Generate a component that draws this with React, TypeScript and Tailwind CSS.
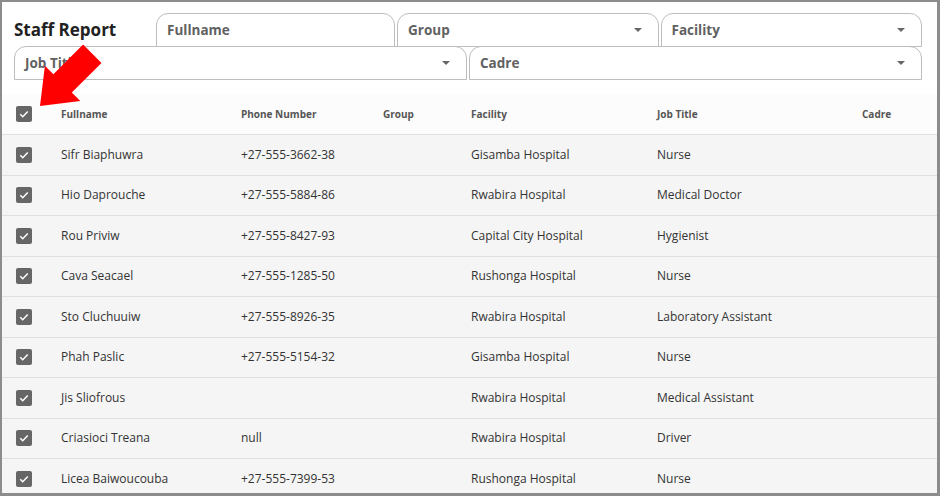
import React from "react";

const rows = [
    { name: "Sifr Biaphuwra", phone: "+27-555-3662-38", facility: "Gisamba Hospital", job: "Nurse" },
    { name: "Hio Daprouche", phone: "+27-555-5884-86", facility: "Rwabira Hospital", job: "Medical Doctor" },
    { name: "Rou Priviw", phone: "+27-555-8427-93", facility: "Capital City Hospital", job: "Hygienist" },
    { name: "Cava Seacael", phone: "+27-555-1285-50", facility: "Rushonga Hospital", job: "Nurse" },
    { name: "Sto Cluchuuiw", phone: "+27-555-8926-35", facility: "Rwabira Hospital", job: "Laboratory Assistant" },
    { name: "Phah Paslic", phone: "+27-555-5154-32", facility: "Gisamba Hospital", job: "Nurse" },
    { name: "Jis Sliofrous", phone: "", facility: "Rwabira Hospital", job: "Medical Assistant" },
    { name: "Criasioci Treana", phone: "null", facility: "Rwabira Hospital", job: "Driver" },
    { name: "Licea Baiwoucouba", phone: "+27-555-7399-53", facility: "Rushonga Hospital", job: "Nurse" },
];

const cols = "grid grid-cols-[59px_180px_142px_88px_186px_205px_1fr] items-center";

function Check() {
    return (
        <div className="w-[16px] h-[16px] rounded-[2px] bg-[#666666] flex items-center justify-center">
            <svg width="12" height="12" viewBox="0 0 24 24">
                <path d="M4.5 12.5l5 5L19.5 7" fill="none" stroke="#fff" strokeWidth="3" />
            </svg>
        </div>
    );
}

function Filter({ label, select }: { label: string; select?: boolean }) {
    return (
        <div className="h-[34px] border border-[#bdbdbd] rounded-t-[12px] bg-white flex items-center justify-between pl-[10px] pr-[16px]">
            <span className="text-[13.5px] font-bold text-[#616161]">{label}</span>
            {select && (
                <svg width="8" height="4" viewBox="0 0 8 4">
                    <path d="M0 0h8L4 4z" fill="#666" />
                </svg>
            )}
        </div>
    );
}

export default function App() {
    return (
        <div
            className="relative w-[940px] h-[496px] overflow-hidden bg-white border-l-2 border-t-2 border-r-[3px] border-b-[3px] border-[#8c8c8c]"
            style={{ fontFamily: '"Open Sans", "Liberation Sans", sans-serif' }}
        >
            <div className="pt-[11px] pl-[12px] pr-[15px]">
                <div className="grid grid-cols-[140px_239px_1fr_1fr] gap-x-[2px]">
                    <div className="flex items-center h-[34px]">
                        <h1 className="text-[17px] font-bold text-[#222]">Staff Report</h1>
                    </div>
                    <Filter label="Fullname" />
                    <Filter label="Group" select />
                    <Filter label="Facility" select />
                </div>
                <div className="grid grid-cols-2 gap-x-[2px] -mt-px">
                    <Filter label="Job Title" select />
                    <Filter label="Cadre" select />
                </div>
            </div>

            <div className="mt-[14px]">
                <div className={`${cols} h-[41px] bg-[#fcfcfc] border-b border-[#e0e0e0] text-[10px] font-bold text-[#555]`}>
                    <div className="pl-[14px]"><Check /></div>
                    <div>Fullname</div>
                    <div>Phone Number</div>
                    <div>Group</div>
                    <div>Facility</div>
                    <div>Job Title</div>
                    <div>Cadre</div>
                </div>
                {rows.map((r) => (
                    <div key={r.name} className={`${cols} h-[40.5px] bg-[#f5f5f5] border-b border-[#e0e0e0] text-[12px] text-[#333]`}>
                        <div className="pl-[14px]"><Check /></div>
                        <div>{r.name}</div>
                        <div>{r.phone}</div>
                        <div></div>
                        <div>{r.facility}</div>
                        <div>{r.job}</div>
                        <div></div>
                    </div>
                ))}
            </div>

            <svg className="absolute left-0 top-0 pointer-events-none" width="120" height="120" viewBox="2 2 120 120">
                <polygon
                    points="40,106 80.3,101.1 71.8,92.6 101.5,62.9 83.1,44.5 53.4,74.2 44.9,65.7"
                    fill="#ff0000"
                />
            </svg>
        </div>
    );
}
